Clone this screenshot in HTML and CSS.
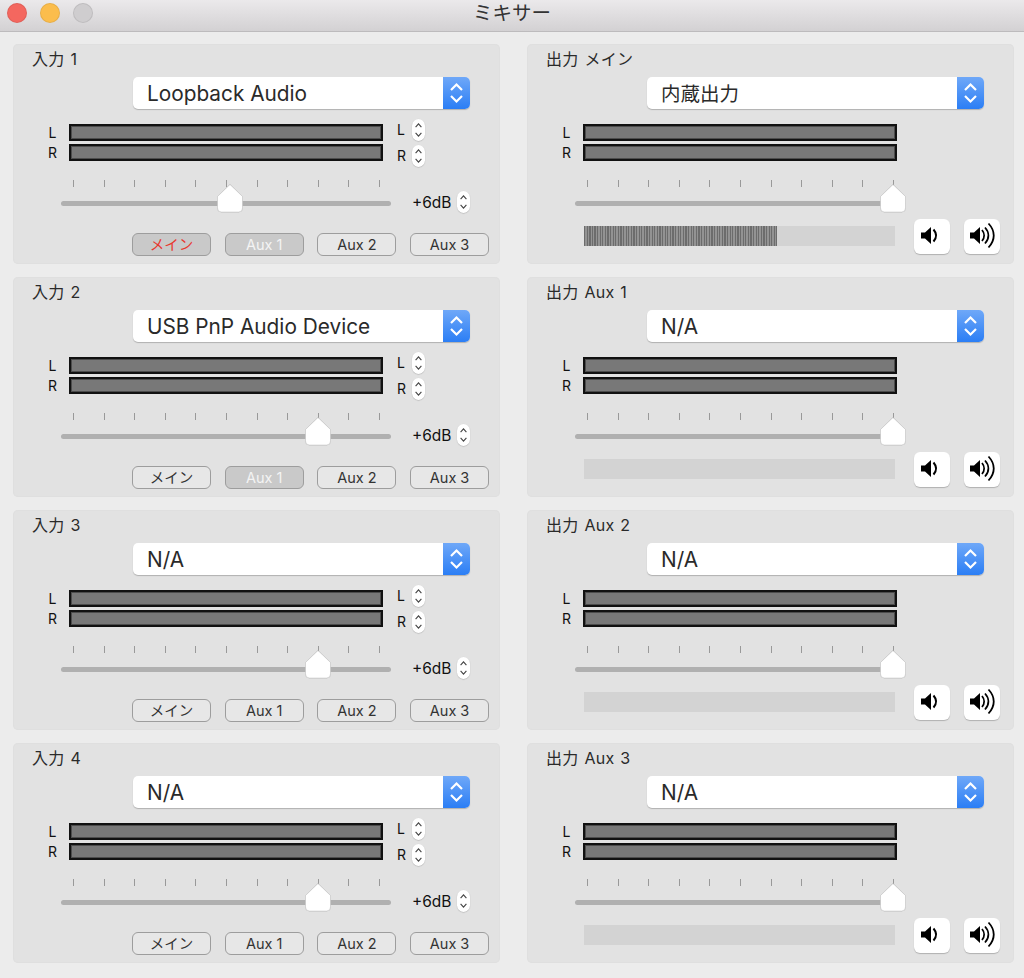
FILE: index.html
```html
<!DOCTYPE html>
<html lang="ja">
<head>
<meta charset="utf-8">
<title>ミキサー</title>
<link rel="stylesheet" href="styles.css">
</head>
<body>
<svg class="defs" width="0" height="0" aria-hidden="true">
  <symbol id="chev" viewBox="0 0 13 22"><path d="M3.600 8.200 6.500 4.800 9.400 8.200M3.600 13.800 6.500 17.200 9.400 13.800" fill="none" stroke="#444" stroke-width="1.100"/></symbol>
  <symbol id="chev-w" viewBox="0 0 27 32"><path d="M8 13 13.500 7.500 19 13M8 19 13.500 24.500 19 19" fill="none" stroke="#fff" stroke-width="2.200"/></symbol>
  <symbol id="thumb" viewBox="0 0 26 29"><path d="M13 .5 25.500 12.500V24a4 4 0 0 1-4 4H4.500a4 4 0 0 1-4-4V12.500Z" fill="#fff" stroke="#ccc" stroke-width=".6"/></symbol>
  <symbol id="spk-lo" viewBox="0 0 36 35"><path d="M7 13.500h4l6-5.500v17l-6-5.500H7Z" fill="#000"/><path d="M19.500 10.500c3.200 3.700 3.200 8.300 0 12" fill="none" stroke="#000" stroke-width="2"/></symbol>
  <symbol id="spk-hi" viewBox="0 0 36 35"><path d="M6 13.500h4l6-5.500v17l-6-5.500H6Z" fill="#000"/><path d="M18 11c2.800 3.300 2.800 7.700 0 11M21 8.500c4.500 5 4.500 11 0 16M24.500 4.500c7 7.500 7 16.500 0 24" fill="none" stroke="#000" stroke-width="1.800"/></symbol>
</svg>

<header class="titlebar">
  <div class="lights"><span class="light red"></span><span class="light yellow"></span><span class="light gray"></span></div>
  <div class="wintitle">ミキサー</div>
</header>

<main class="mixer">
  <section class="panel">
    <h2 class="ptitle">入力 1</h2>
    <div class="select"><span class="sel-text">Loopback Audio</span><span class="sel-arrow"><svg width="27" height="32"><use href="#chev-w"/></svg></span></div>
    <div class="meters">
      <div class="lr"><span>L</span><span>R</span></div>
      <div class="bars"><div class="bar"></div><div class="bar"></div></div>
      <div class="chans">
        <div class="chan"><span>L</span><svg class="stepper" width="13" height="22"><use href="#chev"/></svg></div>
        <div class="chan"><span>R</span><svg class="stepper" width="13" height="22"><use href="#chev"/></svg></div>
      </div>
    </div>
    <div class="ticks"><i></i><i></i><i></i><i></i><i></i><i></i><i></i><i></i><i></i><i></i><i></i></div>
    <div class="sliderrow">
      <div class="track"><svg class="thumb" style="left:156px" width="26" height="29"><use href="#thumb"/></svg></div>
      <span class="gain">+6dB</span><svg class="stepper" width="13" height="22"><use href="#chev"/></svg>
    </div>
    <div class="routes"><span class="route on main">メイン</span><span class="route on">Aux 1</span><span class="route">Aux 2</span><span class="route">Aux 3</span></div>
  </section>

  <section class="panel">
    <h2 class="ptitle">出力 メイン</h2>
    <div class="select"><span class="sel-text cjk">内蔵出力</span><span class="sel-arrow"><svg width="27" height="32"><use href="#chev-w"/></svg></span></div>
    <div class="meters">
      <div class="lr"><span>L</span><span>R</span></div>
      <div class="bars"><div class="bar"></div><div class="bar"></div></div>
    </div>
    <div class="ticks"><i></i><i></i><i></i><i></i><i></i><i></i><i></i><i></i><i></i><i></i><i></i></div>
    <div class="sliderrow">
      <div class="track"><svg class="thumb" style="left:305px" width="26" height="29"><use href="#thumb"/></svg></div>
    </div>
    <div class="outfoot">
      <div class="level"><div class="fill" style="width:193px"></div></div>
      <span class="spk"><svg width="36" height="35"><use href="#spk-lo"/></svg></span>
      <span class="spk"><svg width="36" height="35"><use href="#spk-hi"/></svg></span>
    </div>
  </section>

  <section class="panel">
    <h2 class="ptitle">入力 2</h2>
    <div class="select"><span class="sel-text">USB PnP Audio Device</span><span class="sel-arrow"><svg width="27" height="32"><use href="#chev-w"/></svg></span></div>
    <div class="meters">
      <div class="lr"><span>L</span><span>R</span></div>
      <div class="bars"><div class="bar"></div><div class="bar"></div></div>
      <div class="chans">
        <div class="chan"><span>L</span><svg class="stepper" width="13" height="22"><use href="#chev"/></svg></div>
        <div class="chan"><span>R</span><svg class="stepper" width="13" height="22"><use href="#chev"/></svg></div>
      </div>
    </div>
    <div class="ticks"><i></i><i></i><i></i><i></i><i></i><i></i><i></i><i></i><i></i><i></i><i></i></div>
    <div class="sliderrow">
      <div class="track"><svg class="thumb" style="left:244px" width="26" height="29"><use href="#thumb"/></svg></div>
      <span class="gain">+6dB</span><svg class="stepper" width="13" height="22"><use href="#chev"/></svg>
    </div>
    <div class="routes"><span class="route">メイン</span><span class="route on">Aux 1</span><span class="route">Aux 2</span><span class="route">Aux 3</span></div>
  </section>

  <section class="panel">
    <h2 class="ptitle">出力 Aux 1</h2>
    <div class="select"><span class="sel-text">N/A</span><span class="sel-arrow"><svg width="27" height="32"><use href="#chev-w"/></svg></span></div>
    <div class="meters">
      <div class="lr"><span>L</span><span>R</span></div>
      <div class="bars"><div class="bar"></div><div class="bar"></div></div>
    </div>
    <div class="ticks"><i></i><i></i><i></i><i></i><i></i><i></i><i></i><i></i><i></i><i></i><i></i></div>
    <div class="sliderrow">
      <div class="track"><svg class="thumb" style="left:305px" width="26" height="29"><use href="#thumb"/></svg></div>
    </div>
    <div class="outfoot">
      <div class="level"></div>
      <span class="spk"><svg width="36" height="35"><use href="#spk-lo"/></svg></span>
      <span class="spk"><svg width="36" height="35"><use href="#spk-hi"/></svg></span>
    </div>
  </section>

  <section class="panel">
    <h2 class="ptitle">入力 3</h2>
    <div class="select"><span class="sel-text">N/A</span><span class="sel-arrow"><svg width="27" height="32"><use href="#chev-w"/></svg></span></div>
    <div class="meters">
      <div class="lr"><span>L</span><span>R</span></div>
      <div class="bars"><div class="bar"></div><div class="bar"></div></div>
      <div class="chans">
        <div class="chan"><span>L</span><svg class="stepper" width="13" height="22"><use href="#chev"/></svg></div>
        <div class="chan"><span>R</span><svg class="stepper" width="13" height="22"><use href="#chev"/></svg></div>
      </div>
    </div>
    <div class="ticks"><i></i><i></i><i></i><i></i><i></i><i></i><i></i><i></i><i></i><i></i><i></i></div>
    <div class="sliderrow">
      <div class="track"><svg class="thumb" style="left:244px" width="26" height="29"><use href="#thumb"/></svg></div>
      <span class="gain">+6dB</span><svg class="stepper" width="13" height="22"><use href="#chev"/></svg>
    </div>
    <div class="routes"><span class="route">メイン</span><span class="route">Aux 1</span><span class="route">Aux 2</span><span class="route">Aux 3</span></div>
  </section>

  <section class="panel">
    <h2 class="ptitle">出力 Aux 2</h2>
    <div class="select"><span class="sel-text">N/A</span><span class="sel-arrow"><svg width="27" height="32"><use href="#chev-w"/></svg></span></div>
    <div class="meters">
      <div class="lr"><span>L</span><span>R</span></div>
      <div class="bars"><div class="bar"></div><div class="bar"></div></div>
    </div>
    <div class="ticks"><i></i><i></i><i></i><i></i><i></i><i></i><i></i><i></i><i></i><i></i><i></i></div>
    <div class="sliderrow">
      <div class="track"><svg class="thumb" style="left:305px" width="26" height="29"><use href="#thumb"/></svg></div>
    </div>
    <div class="outfoot">
      <div class="level"></div>
      <span class="spk"><svg width="36" height="35"><use href="#spk-lo"/></svg></span>
      <span class="spk"><svg width="36" height="35"><use href="#spk-hi"/></svg></span>
    </div>
  </section>

  <section class="panel">
    <h2 class="ptitle">入力 4</h2>
    <div class="select"><span class="sel-text">N/A</span><span class="sel-arrow"><svg width="27" height="32"><use href="#chev-w"/></svg></span></div>
    <div class="meters">
      <div class="lr"><span>L</span><span>R</span></div>
      <div class="bars"><div class="bar"></div><div class="bar"></div></div>
      <div class="chans">
        <div class="chan"><span>L</span><svg class="stepper" width="13" height="22"><use href="#chev"/></svg></div>
        <div class="chan"><span>R</span><svg class="stepper" width="13" height="22"><use href="#chev"/></svg></div>
      </div>
    </div>
    <div class="ticks"><i></i><i></i><i></i><i></i><i></i><i></i><i></i><i></i><i></i><i></i><i></i></div>
    <div class="sliderrow">
      <div class="track"><svg class="thumb" style="left:244px" width="26" height="29"><use href="#thumb"/></svg></div>
      <span class="gain">+6dB</span><svg class="stepper" width="13" height="22"><use href="#chev"/></svg>
    </div>
    <div class="routes"><span class="route">メイン</span><span class="route">Aux 1</span><span class="route">Aux 2</span><span class="route">Aux 3</span></div>
  </section>

  <section class="panel">
    <h2 class="ptitle">出力 Aux 3</h2>
    <div class="select"><span class="sel-text">N/A</span><span class="sel-arrow"><svg width="27" height="32"><use href="#chev-w"/></svg></span></div>
    <div class="meters">
      <div class="lr"><span>L</span><span>R</span></div>
      <div class="bars"><div class="bar"></div><div class="bar"></div></div>
    </div>
    <div class="ticks"><i></i><i></i><i></i><i></i><i></i><i></i><i></i><i></i><i></i><i></i><i></i></div>
    <div class="sliderrow">
      <div class="track"><svg class="thumb" style="left:305px" width="26" height="29"><use href="#thumb"/></svg></div>
    </div>
    <div class="outfoot">
      <div class="level"></div>
      <span class="spk"><svg width="36" height="35"><use href="#spk-lo"/></svg></span>
      <span class="spk"><svg width="36" height="35"><use href="#spk-hi"/></svg></span>
    </div>
  </section>
</main>
</body>
</html>
```
FILE: styles.css
```css
* { box-sizing: border-box; }
html, body { margin: 0; height: 100%; overflow: hidden; }
body {
  background: #ececec;
  color: #222;
  font-family: "Inter", "Noto Sans CJK JP", sans-serif;
}
.defs { position: absolute; }
.titlebar {
  height: 32px;
  display: flex;
  align-items: flex-start;
  justify-content: center;
  position: relative;
  background: linear-gradient(#ebe9eb, #d3d1d3);
  border-bottom: 1px solid #bdbbbd;
}
.lights { position: absolute; left: 7px; top: 3px; display: flex; gap: 13px; }
.light { width: 20px; height: 20px; border-radius: 50%; border: 1px solid rgba(0,0,0,.08); }
.red { background: #f4675f; }
.yellow { background: #fbbd4c; }
.gray { background: #cfcdcf; }
.wintitle { font-size: 19.500px; line-height: 26px; color: #333; }

.mixer {
  display: grid;
  grid-template-columns: 487px 487px;
  grid-auto-rows: 220px;
  column-gap: 27px;
  row-gap: 13px;
  padding: 12px 0 0 13px;
}
.panel {
  background: #e2e2e2;
  border-radius: 5px;
  box-shadow: inset 0 0 0 1px #dfdfdf;
  display: flex;
  flex-direction: column;
}
.ptitle {
  margin: 0;
  height: 33px;
  padding: 3px 0 0 19px;
  font-size: 16px;
  line-height: 24px;
  font-weight: 400;
  word-spacing: 1px;
  letter-spacing: .3px;
  color: #2a2a2a;
}
.select {
  margin-left: 120px;
  width: 337px;
  height: 32px;
  display: flex;
  background: #fff;
  border-radius: 5px;
  box-shadow: 0 1px 1px rgba(0,0,0,.22);
  overflow: hidden;
}
.sel-text { flex: 1; padding-left: 14px; font-size: 20.800px; line-height: 34px; color: #2a2a2a; }
.sel-text.cjk { font-size: 19.500px; }
.sel-arrow { width: 27px; height: 32px; background: linear-gradient(#6fa8f8, #2b7ef5); }
.sel-arrow svg { display: block; }

.meters { display: flex; align-items: flex-start; margin-top: 15px; height: 37px; }
.lr {
  width: 56px;
  display: flex;
  flex-direction: column;
  align-items: center;
  padding-left: 23px;
  font-size: 14px;
  line-height: 20px;
  color: #111;
  margin-top: -1px;
}
.bars { width: 314px; display: flex; flex-direction: column; gap: 3px; }
.bar { height: 17px; background: #787878; border: 2px solid #111; box-shadow: inset 0 0 0 1px #4c4c4c; }
.chans { margin: -5px 0 0 14px; display: flex; flex-direction: column; gap: 4px; }
.chan { display: flex; gap: 6px; width: 28px; font-size: 14px; line-height: 22px; color: #111; }
.chan span { width: 9px; }
.stepper { background: #fff; border-radius: 6.500px; box-shadow: 0 .5px 1px rgba(0,0,0,.25); flex: none; }

.ticks { display: flex; justify-content: space-between; margin: 19px 0 0 60px; width: 307px; height: 7px; }
.ticks i { width: 1px; height: 7px; background: #999; }

.sliderrow { display: flex; align-items: center; height: 22px; margin-top: 4px; padding-left: 48px; }
.track { position: relative; width: 330px; height: 5px; margin-top: 3px; background: #b0b0b0; border-radius: 3px; flex: none; }
.thumb { position: absolute; top: -17px; filter: drop-shadow(0 .5px .5px rgba(0,0,0,.25)); }
.gain { margin: 0 6px 0 21px; width: 39px; flex: none; font-size: 15.500px; color: #111; white-space: nowrap; }

.routes { display: flex; gap: 13.700px; margin: 20px 0 0 119px; }
.route {
  width: 79px;
  height: 23px;
  border: 1.500px solid #9d9d9d;
  border-radius: 6px;
  background: #e7e7e7;
  font-size: 14.500px;
  line-height: 22px;
  text-align: center;
  color: #333;
}
.route.on { background: #c9c9c9; color: #f4f4f4; }
.route.main { color: #e8382e; }

.outfoot { display: flex; align-items: flex-start; margin: 6px 0 0 57px; }
.level { flex: none; width: 311px; height: 20px; margin-top: 7px; background: #d3d3d3; margin-right: 19px; }
.fill { height: 100%; background: repeating-linear-gradient(90deg, #6c6c6c 0 1.300px, #939393 1.300px 2.600px); }
.spk { flex: none; width: 36px; height: 35px; background: #fff; border-radius: 6px; box-shadow: 0 1px 1px rgba(0,0,0,.22); margin-right: 14px; }
.spk svg { display: block; }
```
